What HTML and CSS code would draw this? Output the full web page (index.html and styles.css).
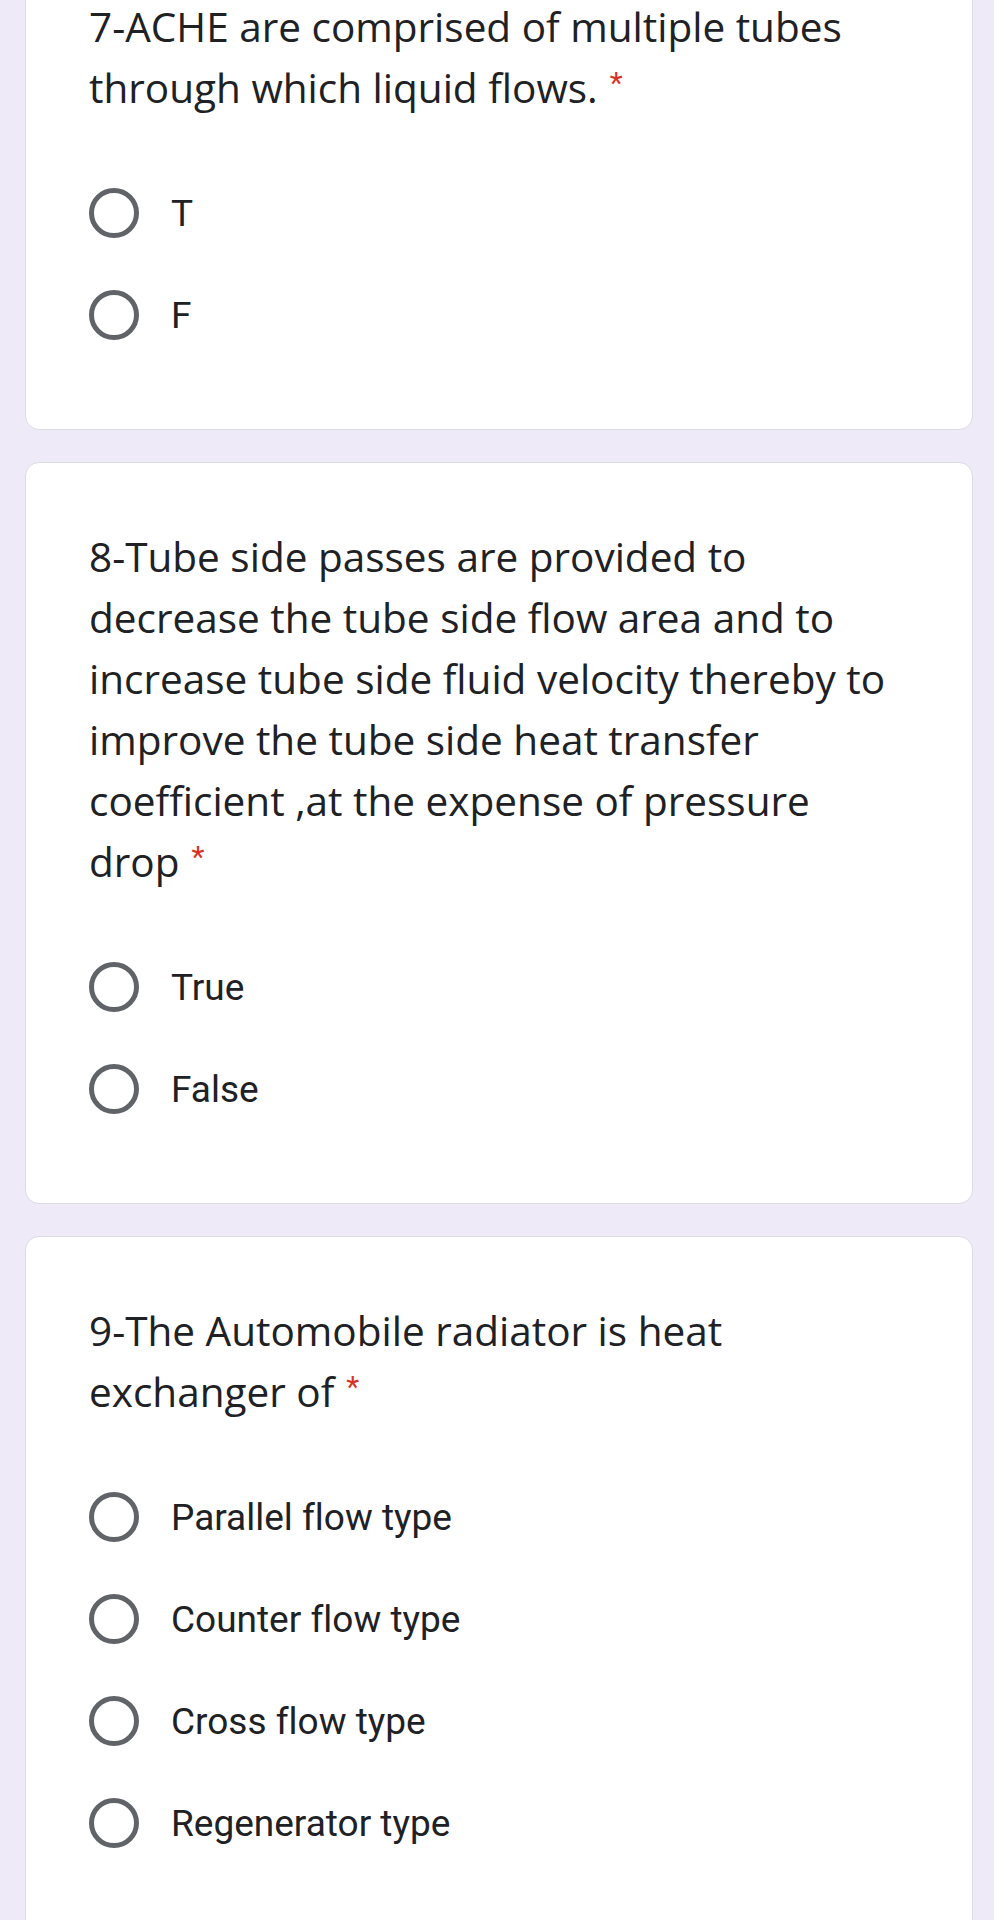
FILE: index.html
```html
<!DOCTYPE html>
<html lang="en">
<head>
<meta charset="utf-8">
<title>Form</title>
<link rel="stylesheet" href="styles.css">
</head>
<body>
<main class="page">
  <section class="card card-first">
    <div class="question">7-ACHE are comprised of multiple tubes<br>through which liquid flows.<span class="req">*</span></div>
    <div class="options">
      <label class="option"><span class="radio"></span><span class="opt-text">T</span></label>
      <label class="option"><span class="radio"></span><span class="opt-text">F</span></label>
    </div>
  </section>

  <section class="card">
    <div class="question">8-Tube side passes are provided to<br>decrease the tube side flow area and to<br>increase tube side fluid velocity thereby to<br>improve the tube side heat transfer<br>coefficient ,at the expense of pressure<br>drop<span class="req">*</span></div>
    <div class="options">
      <label class="option"><span class="radio"></span><span class="opt-text">True</span></label>
      <label class="option"><span class="radio"></span><span class="opt-text">False</span></label>
    </div>
  </section>

  <section class="card">
    <div class="question">9-The Automobile radiator is heat<br>exchanger of<span class="req">*</span></div>
    <div class="options">
      <label class="option"><span class="radio"></span><span class="opt-text">Parallel flow type</span></label>
      <label class="option"><span class="radio"></span><span class="opt-text">Counter flow type</span></label>
      <label class="option"><span class="radio"></span><span class="opt-text">Cross flow type</span></label>
      <label class="option"><span class="radio"></span><span class="opt-text">Regenerator type</span></label>
    </div>
  </section>
</main>
</body>
</html>
```

FILE: styles.css
```css
html, body {
  margin: 0;
  padding: 0;
  background: #eeeaf8;
}

body {
  overflow: hidden;
  height: 1920px;
  font-variant-ligatures: none;
}

.page {
  display: flex;
  flex-direction: column;
  gap: 32px;
  padding: 0 21px 0 25px;
}

.card {
  background: #ffffff;
  border: 1px solid #dadce0;
  border-radius: 14px;
  padding: 63px 63px 63px 63px;
  display: flex;
  flex-direction: column;
  gap: 44px;
}

.card-first {
  margin-top: -68px;
}

.question {
  font-family: "Open Sans", "Roboto", sans-serif;
  font-size: 40.5px;
  line-height: 61px;
  color: #202124;
  letter-spacing: 0;
}

.req {
  color: #d93025;
  font-family: "Roboto", sans-serif;
  font-size: 30px;
  line-height: 0;
  padding-left: 12px;
  vertical-align: 10px;
}

.options {
  display: flex;
  flex-direction: column;
}

.option {
  height: 102px;
  display: flex;
  align-items: center;
  gap: 32px;
}

.radio {
  width: 50px;
  height: 50px;
  box-sizing: border-box;
  border: 5px solid #606368;
  border-radius: 50%;
  flex: none;
}

.opt-text {
  font-family: "Roboto", sans-serif;
  font-size: 37px;
  color: #202124;
}
```
